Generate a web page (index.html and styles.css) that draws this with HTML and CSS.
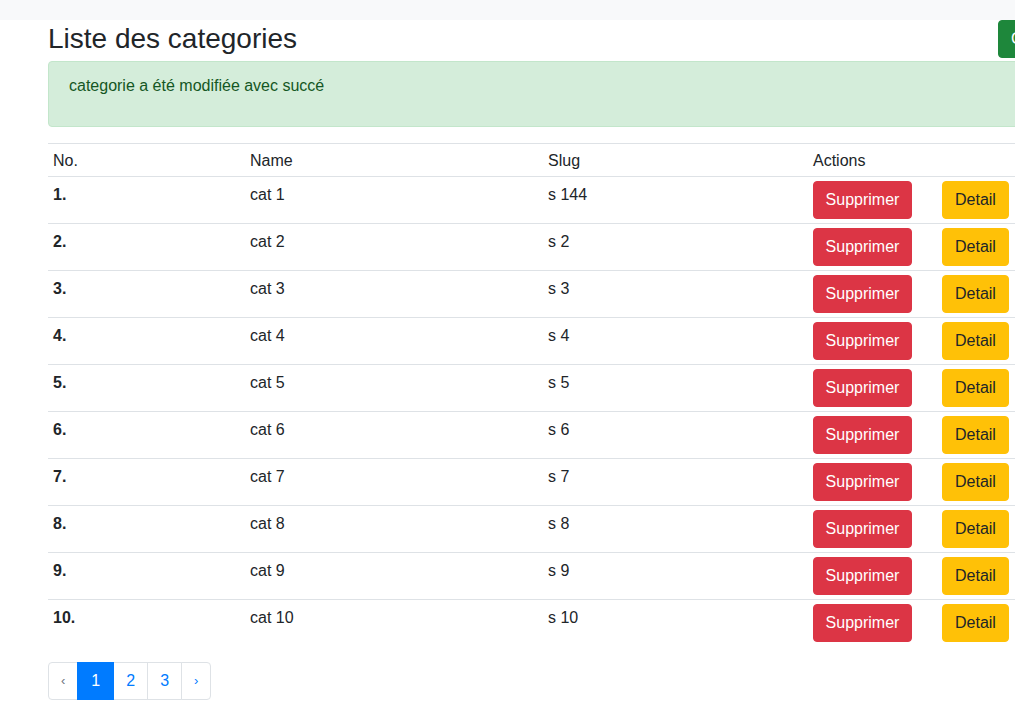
FILE: index.html
```html
<!DOCTYPE html>
<html lang="fr">
<head>
<meta charset="utf-8">
<title>Liste des categories</title>
<link rel="stylesheet" href="styles.css">
</head>
<body>
<div class="topbar"></div>
<div class="page">
  <div class="content">
    <div class="header">
      <h3 class="title">Liste des categories</h3>
      <a class="btn btn-success" href="#">Créer une categorie</a>
    </div>
    <div class="alert">
      <p>categorie a été modifiée avec succé</p>
    </div>
    <table class="table">
      <colgroup>
        <col class="c1"><col class="c2"><col class="c3"><col class="c4">
      </colgroup>
      <thead>
        <tr><td>No.</td><td>Name</td><td>Slug</td><td>Actions</td></tr>
      </thead>
      <tbody>
        <tr><th>1.</th><td>cat 1</td><td>s 144</td><td class="act"><div class="actions"><button class="btn btn-danger">Supprimer</button><button class="btn btn-warning">Detail</button></div></td></tr>
        <tr><th>2.</th><td>cat 2</td><td>s 2</td><td class="act"><div class="actions"><button class="btn btn-danger">Supprimer</button><button class="btn btn-warning">Detail</button></div></td></tr>
        <tr><th>3.</th><td>cat 3</td><td>s 3</td><td class="act"><div class="actions"><button class="btn btn-danger">Supprimer</button><button class="btn btn-warning">Detail</button></div></td></tr>
        <tr><th>4.</th><td>cat 4</td><td>s 4</td><td class="act"><div class="actions"><button class="btn btn-danger">Supprimer</button><button class="btn btn-warning">Detail</button></div></td></tr>
        <tr><th>5.</th><td>cat 5</td><td>s 5</td><td class="act"><div class="actions"><button class="btn btn-danger">Supprimer</button><button class="btn btn-warning">Detail</button></div></td></tr>
        <tr><th>6.</th><td>cat 6</td><td>s 6</td><td class="act"><div class="actions"><button class="btn btn-danger">Supprimer</button><button class="btn btn-warning">Detail</button></div></td></tr>
        <tr><th>7.</th><td>cat 7</td><td>s 7</td><td class="act"><div class="actions"><button class="btn btn-danger">Supprimer</button><button class="btn btn-warning">Detail</button></div></td></tr>
        <tr><th>8.</th><td>cat 8</td><td>s 8</td><td class="act"><div class="actions"><button class="btn btn-danger">Supprimer</button><button class="btn btn-warning">Detail</button></div></td></tr>
        <tr><th>9.</th><td>cat 9</td><td>s 9</td><td class="act"><div class="actions"><button class="btn btn-danger">Supprimer</button><button class="btn btn-warning">Detail</button></div></td></tr>
        <tr><th>10.</th><td>cat 10</td><td>s 10</td><td class="act"><div class="actions"><button class="btn btn-danger">Supprimer</button><button class="btn btn-warning">Detail</button></div></td></tr>
      </tbody>
    </table>
    <ul class="pagination">
      <li class="page-item disabled"><span class="page-link arrow">&lsaquo;</span></li>
      <li class="page-item active"><span class="page-link">1</span></li>
      <li class="page-item"><a class="page-link" href="#">2</a></li>
      <li class="page-item"><a class="page-link" href="#">3</a></li>
      <li class="page-item"><a class="page-link arrow" href="#">&rsaquo;</a></li>
    </ul>
  </div>
</div>
</body>
</html>
```
FILE: styles.css
```css
* { box-sizing: border-box; }
html, body { margin: 0; padding: 0; }
body {
  font-family: "Liberation Sans", Arial, sans-serif;
  font-size: 16px;
  line-height: 1.5;
  color: #212529;
  background: #fff;
  width: 1015px;
  height: 705px;
  overflow: hidden;
}
.topbar { height: 20px; background: #f8f9fa; }
.page { padding-left: 48px; }
.content { width: 1000px; }
.header { display: flex; align-items: flex-start; }
.title {
  flex: 0 0 950px;
  margin: 0 0 5px;
  padding-top: 2px;
  font-size: 28px;
  font-weight: 500;
  line-height: 1.2;
}
.btn {
  display: inline-block;
  font-family: inherit;
  font-size: 16px;
  line-height: 1.5;
  padding: 6px 12px;
  border: 1px solid transparent;
  border-radius: 4px;
  text-decoration: none;
  white-space: nowrap;
  cursor: pointer;
}
.btn-success { background: #1e873b; border-color: #1e873b; color: #fff; }
.btn-danger { background: #dc3545; border-color: #dc3545; color: #fff; }
.btn-warning { background: #ffc107; border-color: #ffc107; color: #212529; }
.alert {
  background: #d4edda;
  border: 1px solid #c3e6cb;
  color: #155724;
  border-radius: 4px;
  padding: 12px 20px;
  margin-bottom: 16px;
}
.alert p { margin: 0 0 16px; }
.table {
  width: 1000px;
  border-collapse: collapse;
  table-layout: fixed;
  margin-bottom: 16px;
}
.c1 { width: 197px; }
.c2 { width: 298px; }
.c3 { width: 265px; }
.c4 { width: 240px; }
.table td, .table th {
  padding: 6px 5px 4px;
  border-top: 1px solid #dee2e6;
  text-align: left;
  vertical-align: top;
  font-weight: 400;
}
.table thead td { padding: 5px 5px 3px; }
.table tbody td.act { padding-top: 4px; }
.table tbody th { font-weight: 700; }
.actions { display: flex; gap: 30px; }
.btn-danger { width: 99px; padding-left: 0; padding-right: 0; text-align: center; }
.pagination {
  display: flex;
  list-style: none;
  margin: 0;
  padding: 0;
}
.page-link {
  display: block;
  padding: 8px 12px;
  margin-left: -1px;
  line-height: 1.25;
  color: #007bff;
  background: #fff;
  border: 1px solid #dee2e6;
  text-decoration: none;
}
.page-item:first-child .page-link { margin-left: 0; border-radius: 4px 0 0 4px; }
.page-item:last-child .page-link { border-radius: 0 4px 4px 0; }
.page-item.active .page-link { background: #007bff; border-color: #007bff; color: #fff; position: relative; padding-left: 13px; padding-right: 13px; }
.page-item.disabled .page-link { color: #6c757d; }
.arrow { font-size: 13px; line-height: 20px; padding-left: 12px; padding-right: 12px; }
```
